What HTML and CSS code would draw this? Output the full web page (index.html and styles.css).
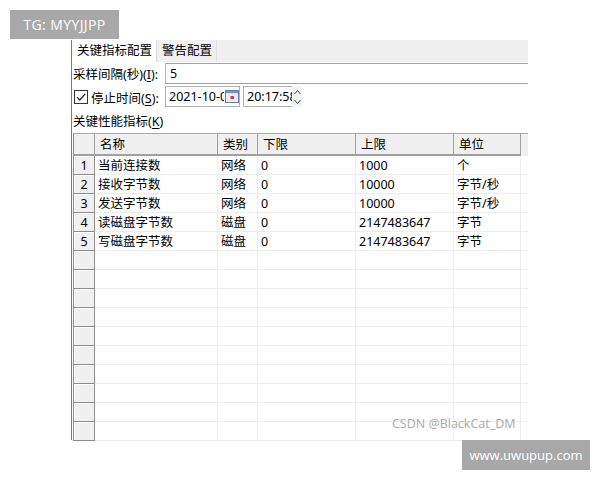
FILE: index.html
```html
<!DOCTYPE html>
<html>
<head>
<meta charset="utf-8">
<link rel="stylesheet" href="styles.css">
</head>
<body>
<div class="badge badge-tg">TG: MYYJJPP</div>
<div class="window">
  <div class="tabs">
    <div class="tab active">关键指标配置</div>
    <div class="tab">警告配置</div>
    <div class="tab-fill"></div>
  </div>
  <div class="form-row row-interval">
    <span class="label">采样间隔(秒)(<u>I</u>):</span>
    <div class="input input-wide">5</div>
  </div>
  <div class="form-row row-stop">
    <span class="check">
      <svg width="12" height="12" viewBox="0 0 12 12"><path d="M2 6.2 L4.8 9 L10.2 2.8" fill="none" stroke="#222" stroke-width="1.2"/></svg>
    </span>
    <span class="label">停止时间(<u>S</u>):</span>
    <div class="input input-date">
      <span class="clip-text">2021-10-01</span>
      <svg class="cal" width="14" height="13" viewBox="0 0 14 13">
        <rect x="0.5" y="0.5" width="13" height="12" fill="#fff" stroke="#6a7fa8"/>
        <rect x="1" y="1" width="12" height="2.5" fill="#8096c0"/>
        <rect x="1" y="3.5" width="12" height="8.5" fill="#e9edf5"/>
        <rect x="5.5" y="6" width="3.5" height="3" fill="#d83a3a"/>
      </svg>
    </div>
    <div class="input input-time"><span class="clip-text">20:17:58</span></div>
    <div class="spin">
      <svg width="9" height="20" viewBox="0 0 9 20">
        <path d="M1.5 7 L4.5 3.5 L7.5 7" fill="none" stroke="#444" stroke-width="1"/>
        <path d="M1.5 13 L4.5 16.5 L7.5 13" fill="none" stroke="#444" stroke-width="1"/>
      </svg>
    </div>
  </div>
  <div class="section-label">关键性能指标(<u>K</u>)</div>
  <div class="grid">
    <div class="hc rh"></div><div class="hc">名称</div><div class="hc">类别</div><div class="hc">下限</div><div class="hc">上限</div><div class="hc">单位</div><div class="hc filler"></div>

    <div class="rn">1</div><div class="c">当前连接数</div><div class="c">网络</div><div class="c">0</div><div class="c">1000</div><div class="c">个</div><div class="c filler"></div>
    <div class="rn">2</div><div class="c">接收字节数</div><div class="c">网络</div><div class="c">0</div><div class="c">10000</div><div class="c">字节/秒</div><div class="c filler"></div>
    <div class="rn">3</div><div class="c">发送字节数</div><div class="c">网络</div><div class="c">0</div><div class="c">10000</div><div class="c">字节/秒</div><div class="c filler"></div>
    <div class="rn">4</div><div class="c">读磁盘字节数</div><div class="c">磁盘</div><div class="c">0</div><div class="c">2147483647</div><div class="c">字节</div><div class="c filler"></div>
    <div class="rn">5</div><div class="c">写磁盘字节数</div><div class="c">磁盘</div><div class="c">0</div><div class="c">2147483647</div><div class="c">字节</div><div class="c filler"></div>

    <div class="rn e"></div><div class="c"></div><div class="c"></div><div class="c"></div><div class="c"></div><div class="c"></div><div class="c filler"></div>
    <div class="rn e"></div><div class="c"></div><div class="c"></div><div class="c"></div><div class="c"></div><div class="c"></div><div class="c filler"></div>
    <div class="rn e"></div><div class="c"></div><div class="c"></div><div class="c"></div><div class="c"></div><div class="c"></div><div class="c filler"></div>
    <div class="rn e"></div><div class="c"></div><div class="c"></div><div class="c"></div><div class="c"></div><div class="c"></div><div class="c filler"></div>
    <div class="rn e"></div><div class="c"></div><div class="c"></div><div class="c"></div><div class="c"></div><div class="c"></div><div class="c filler"></div>
    <div class="rn e"></div><div class="c"></div><div class="c"></div><div class="c"></div><div class="c"></div><div class="c"></div><div class="c filler"></div>
    <div class="rn e"></div><div class="c"></div><div class="c"></div><div class="c"></div><div class="c"></div><div class="c"></div><div class="c filler"></div>
    <div class="rn e"></div><div class="c"></div><div class="c"></div><div class="c"></div><div class="c"></div><div class="c"></div><div class="c filler"></div>
    <div class="rn e"></div><div class="c"></div><div class="c"></div><div class="c"></div><div class="c"></div><div class="c"></div><div class="c filler"></div>
    <div class="rn e"></div><div class="c"></div><div class="c"></div><div class="c"></div><div class="c"></div><div class="c"></div><div class="c filler"></div>
  </div>
</div>
<div class="watermark">CSDN @BlackCat_DM</div>
<div class="badge badge-site">www.uwupup.com</div>
</body>
</html>
```
FILE: styles.css
```css
* { box-sizing: border-box; }
html, body {
  margin: 0;
  padding: 0;
  background: #fff;
  width: 600px;
  height: 480px;
  overflow: hidden;
}
body {
  font-family: "Noto Sans", "Noto Sans CJK SC", sans-serif;
  font-size: 12.5px;
  color: #000;
  position: relative;
}
u { text-decoration: underline; text-underline-offset: 2px; }

.badge {
  position: absolute;
  background: #a8a8a8;
  color: #fff;
  font-family: "Open Sans", "Liberation Sans", sans-serif;
  font-size: 13px;
  display: flex;
  align-items: center;
  justify-content: center;
}
.badge-tg { left: 10px; top: 10px; width: 109px; height: 29px; font-size: 14px; letter-spacing: 0.4px; }
.badge-site { left: 462px; top: 440px; width: 128px; height: 30px; font-size: 13px; }

.watermark {
  position: absolute;
  left: 392px;
  top: 415px;
  color: #a9a9a9;
  font-family: "Open Sans", "Noto Sans", sans-serif;
  font-size: 12.5px;
}

.window {
  margin-left: 71px;
  margin-top: 40px;
  width: 457px;
  height: 400px;
  border-left: 1px solid #7c7c7c;
}

.tabs {
  display: flex;
  height: 22px;
}
.tab {
  padding: 0 4px 0 5px;
  line-height: 22px;
  background: #f0f0f0;
  border-right: 1px solid #e2e2e2;
}
.tab.active {
  background: #fff;
  width: 85px;
  border-right: 1px solid #d9d9d9;
}
.tab-fill { flex: 1; background: #f0f0f0; }

.form-row {
  display: flex;
  align-items: center;
}
.label { white-space: nowrap; }
.row-interval { height: 22px; }
.row-interval .label { width: 93px; padding-left: 1px; padding-top: 1px; }
.input {
  border: 1px solid #a2a2a2;
  height: 21px;
  line-height: 20px;
  padding-left: 4px;
  background: #fff;
  overflow: hidden;
  white-space: nowrap;
}
.input-wide { flex: 1; border-right: none; border-left-color: #b8b8b8; }

.row-stop { height: 24px; padding-top: 1px; }
.check {
  width: 14px;
  height: 14px;
  border: 1px solid #333;
  margin-left: 2px;
  margin-right: 3px;
  display: flex;
  align-items: center;
  justify-content: center;
  background: #fff;
}
.row-stop .label { width: 74px; padding-top: 1px; }
.input-date {
  width: 75px;
  display: flex;
  align-items: center;
  position: relative;
  padding-left: 3px;
  border-color: #b0b0b0;
}
.input-date .clip-text { width: 55px; overflow: hidden; display: block; }
.cal { margin-left: 1px; }
.input-time {
  width: 49px;
  margin-left: 3px;
  padding-left: 3px;
  border-color: #b0b0b0;
  border-right: none;
}
.input-time .clip-text { display: block; width: 45px; overflow: hidden; }
.spin {
  width: 10px;
  height: 21px;
  display: flex;
  align-items: center;
  justify-content: center;
  background: #f4f4f4;
}

.section-label {
  height: 25px;
  line-height: 27px;
  padding-left: 1px;
}

.grid {
  margin-left: 1px;
  display: grid;
  grid-template-columns: 21px 123px 40px 98px 98px 67px 1fr;
  grid-auto-rows: 19px;
  grid-template-rows: 22px;
  border-top: 1px solid #a8a8a8;
  border-left: 1px solid #8a8a8a;
}
.hc {
  background: #f0f0f0;
  border-right: 1px solid #a0a0a0;
  border-bottom: 2px solid #a0a0a0;
  padding-left: 5px;
  line-height: 22px;
  white-space: nowrap;
}
.hc.rh { padding: 0; }
.hc.filler { border-right: none; border-bottom: none; }
.c {
  border-right: 1px solid #ededed;
  border-bottom: 1px solid #ededed;
  padding-left: 3px;
  line-height: 20px;
  white-space: nowrap;
}
.c.filler { border-right: none; }
.rn {
  background: #f0f0f0;
  border-right: 1px solid #8c8c8c;
  border-bottom: 1px solid #8c8c8c;
  box-shadow: inset 1px 1px 0 #fff;
  text-align: center;
  line-height: 20px;
}
```
